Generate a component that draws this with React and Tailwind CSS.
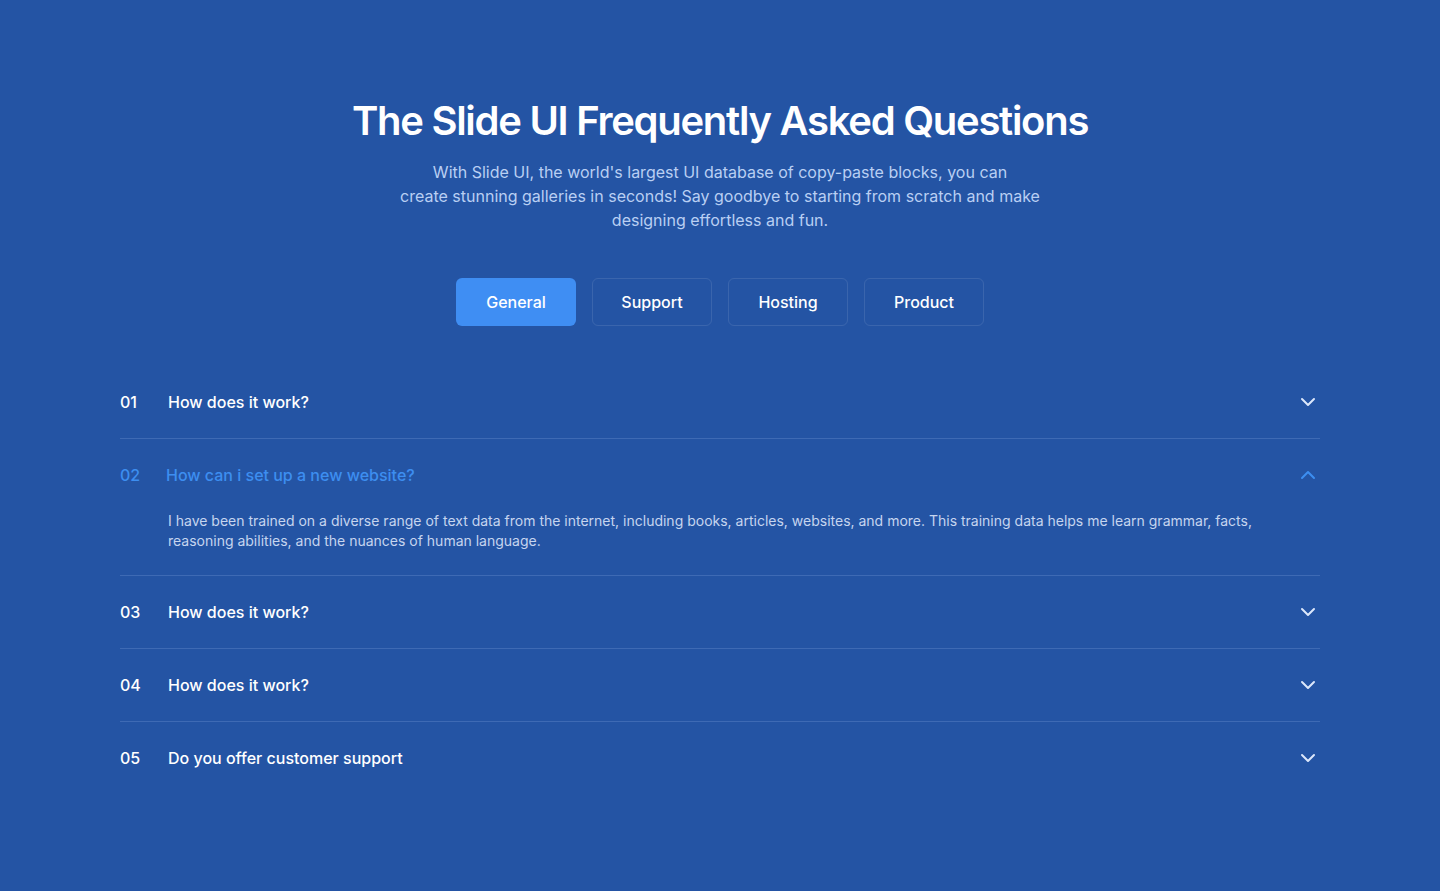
import { useState } from 'react';
import { ChevronDown, ChevronUp } from 'lucide-react';

const tabs = ['General', 'Support', 'Hosting', 'Product'];

const faqs = [
  { q: 'How does it work?', a: '' },
  {
    q: 'How can i set up a new website?',
    a: 'I have been trained on a diverse range of text data from the internet, including books, articles, websites, and more. This training data helps me learn grammar, facts, reasoning abilities, and the nuances of human language.',
  },
  { q: 'How does it work?', a: '' },
  { q: 'How does it work?', a: '' },
  { q: 'Do you offer customer support', a: '' },
];

export default function App() {
  const [tab, setTab] = useState('General');
  const [open, setOpen] = useState(1);

  return (
    <div className="min-h-screen bg-[#2454a4] pt-[97px] pb-20 font-['Inter',sans-serif] text-white">
      <div className="text-center">
        <h1 className="text-[40px] leading-[48px] font-semibold tracking-[-0.032em]">The Slide UI Frequently Asked Questions</h1>
        <p className="mx-auto mt-[15px] w-[680px] text-base leading-6 text-[#b9cff3]">
          With Slide UI, the world's largest UI database of copy-paste blocks, you can
          <br />
          create stunning galleries in seconds! Say goodbye to starting from scratch and make designing effortless and fun.
        </p>
      </div>

      <div className="mt-[46px] flex justify-center gap-4">
        {tabs.map(t => (
          <button
            key={t}
            onClick={() => setTab(t)}
            className={`h-12 w-[120px] rounded-md text-base font-medium cursor-pointer ${t === tab ? 'bg-[#3f8ef3] text-white' : 'border border-white/10 text-white'}`}
          >
            {t}
          </button>
        ))}
      </div>

      <div className="mx-auto mt-10 w-[1200px]">
        {faqs.map((f, i) => {
          const isOpen = open === i;
          return (
            <div key={i} className={i < faqs.length - 1 ? 'border-b border-[#3e6ab4]' : ''}>
              <button
                onClick={() => setOpen(isOpen ? -1 : i)}
                className="flex w-full items-center py-6 text-left cursor-pointer"
              >
                <span className={`w-12 text-base leading-6 font-medium ${isOpen ? 'text-[#3d8ef0]' : 'text-white'}`}>
                  {String(i + 1).padStart(2, '0')}
                </span>
                <span className={`flex-1 text-base leading-6 font-medium ${isOpen ? 'text-[#3d8ef0] -ml-0.5' : 'text-white'}`}>{f.q}</span>
                {isOpen ? (
                  <ChevronUp size={24} strokeWidth={2} className="text-[#3d8ef0]" />
                ) : (
                  <ChevronDown size={24} strokeWidth={2} className="text-[#dce7fb]" />
                )}
              </button>
              {isOpen && (
                <div className="pl-12 pr-16 pb-6 text-sm leading-5 text-[#c6d5ef]">{f.a}</div>
              )}
            </div>
          );
        })}
      </div>
    </div>
  );
}
